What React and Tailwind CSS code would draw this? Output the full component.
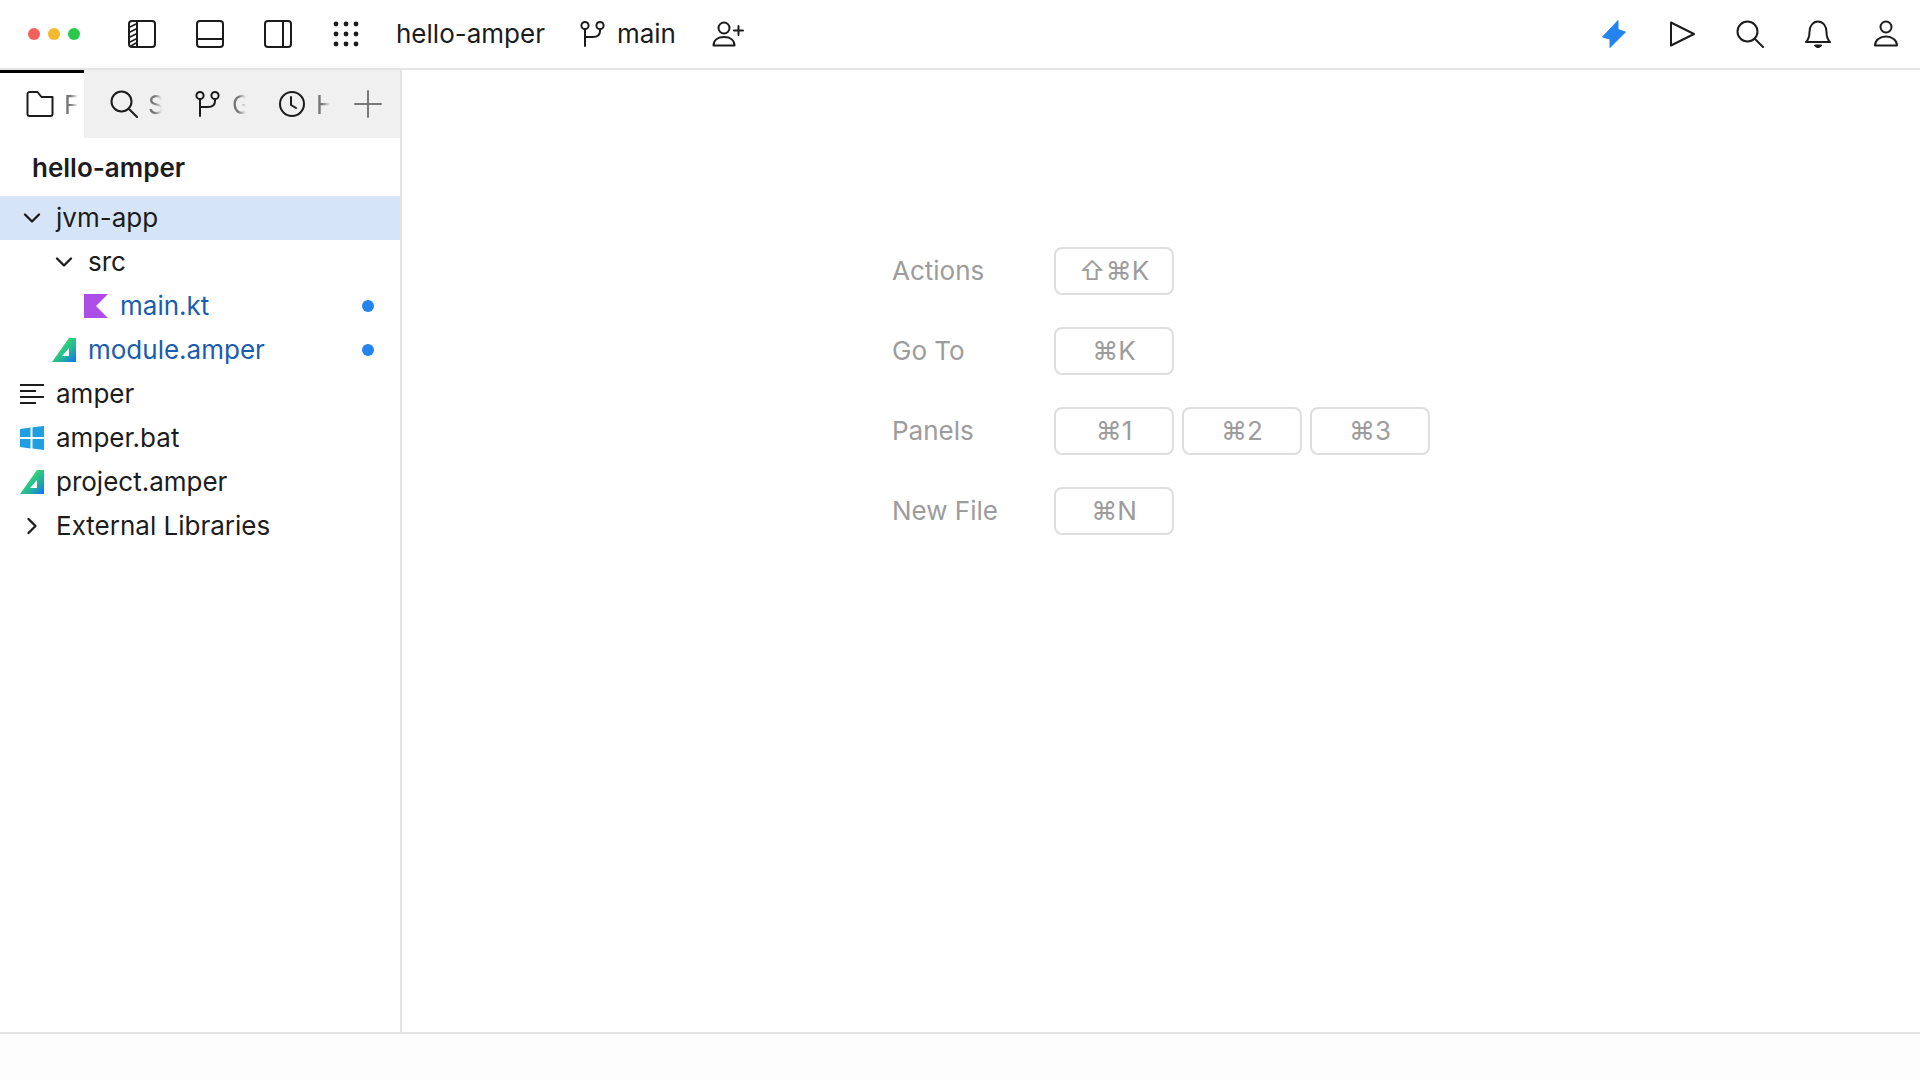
import { ChevronDown, ChevronRight } from 'lucide-react';

const ink = '#1c1c1c';

function Icon({ size = 28, stroke = ink, width = 2, children }) {
  return (
    <svg width={size} height={size} viewBox="0 0 28 28" fill="none" stroke={stroke} strokeWidth={width} strokeLinecap="round" strokeLinejoin="round" className="shrink-0">
      {children}
    </svg>
  );
}

const SidebarLeftIcon = () => (
  <Icon>
    <rect x="1" y="1" width="26" height="26" rx="3" />
    <path d="M9 1v26" />
    <path d="M2 7l6-3M2 12l6-3M2 17l6-3M2 22l6-3M3 26l5-3" strokeWidth="1.5" />
  </Icon>
);
const PanelBottomIcon = () => (
  <Icon>
    <rect x="1" y="1" width="26" height="26" rx="3" />
    <path d="M1 19h26" />
  </Icon>
);
const SidebarRightIcon = () => (
  <Icon>
    <rect x="1" y="1" width="26" height="26" rx="3" />
    <path d="M19 1v26" />
  </Icon>
);
const GridIcon = () => (
  <svg width="26" height="26" viewBox="0 0 26 26" fill={ink} className="shrink-0">
    {[3, 13, 23].map((y) => [3, 13, 23].map((x) => <circle key={`${x}-${y}`} cx={x} cy={y} r="2.4" />))}
  </svg>
);
const BranchIcon = () => (
  <Icon>
    <circle cx="6" cy="5.500" r="3.600" />
    <circle cx="21" cy="5.500" r="3.600" />
    <path d="M6 9.500V26M21 9.500v1.500c0 4-3 6-7 6H6" />
  </Icon>
);
const AddUserIcon = () => (
  <svg width="32" height="26" viewBox="0 0 32 26" fill="none" stroke={ink} strokeWidth="2" strokeLinecap="round" strokeLinejoin="round" className="shrink-0">
    <circle cx="12" cy="7" r="5.5" />
    <path d="M1.5 24.5c0-5.500 4.500-8.500 10.500-8.500s10.500 3 10.500 8.500z" />
    <path d="M26.500 5v9M22 9.500h9" />
  </svg>
);
const BoltIcon = () => (
  <svg width="26" height="30" viewBox="0 0 26 30" className="shrink-0">
    <path d="M17 1.500 L1.500 18 L9 20 L9 28.500 L24.500 13 L17 10.500 Z" fill="#2383f0" stroke="#2383f0" strokeLinejoin="round" />
  </svg>
);
const PlayIcon = () => (
  <Icon>
    <path d="M3 2.500 L26 14 L3 25.500 Z" />
  </Icon>
);
const SearchIcon = () => (
  <Icon>
    <circle cx="11.500" cy="11.500" r="10" />
    <path d="M19 19l8 8" />
  </Icon>
);
const BellIcon = () => (
  <Icon>
    <path d="M2 22c3-3 3.500-6 3.500-10C5.500 6 9 1.500 14 1.500S22.500 6 22.500 12c0 4 .5 7 3.500 10z" />
    <path d="M11 25.500h6l-3 2z" fill={ink} />
  </Icon>
);
const UserIcon = () => (
  <Icon>
    <circle cx="14" cy="7" r="5.500" />
    <path d="M3 25.500c0-5.500 5-9 11-9s11 3.500 11 9z" />
  </Icon>
);
const FolderIcon = () => (
  <Icon>
    <path d="M1.500 4a2 2 0 0 1 2-2h8l4 5h11v17a2 2 0 0 1-2 2H3.500a2 2 0 0 1-2-2z" />
  </Icon>
);
const ClockIcon = () => (
  <Icon>
    <circle cx="14" cy="14" r="12" />
    <path d="M13 7v8l5 3" />
  </Icon>
);
const PlusIcon = () => (
  <Icon stroke="#777777">
    <path d="M14 1v26M1 14h26" />
  </Icon>
);

const KotlinIcon = () => (
  <svg width="24" height="24" viewBox="0 0 24 24" className="shrink-0">
    <path d="M0 0h24L12 12l12 12H0z" fill="#ab4de6" />
  </svg>
);
const AmperIcon = ({ id }) => (
  <svg width="24" height="24" viewBox="0 0 24 24" className="shrink-0">
    <defs>
      <linearGradient id={id} x1="0" y1="0" x2="1" y2="1">
        <stop offset="0.4" stopColor="#2fd07a" />
        <stop offset="0.65" stopColor="#22b39a" />
        <stop offset="0.95" stopColor="#1478f0" />
      </linearGradient>
    </defs>
    <path fillRule="evenodd" d="M17 0h7v24H0zM17 10l-7 8h7z" fill={`url(#${id})`} />
  </svg>
);
const WindowsIcon = () => (
  <svg width="24" height="24" viewBox="0 0 24 24" fill="#1f9fe2" className="shrink-0">
    <path d="M0 3l10.500-1.500V11H0zM12.500 1.200L24 0v11H12.500zM0 13h10.500v9.500L0 21zM12.500 13H24v11l-11.500-1.500z" />
  </svg>
);
const ScriptIcon = () => (
  <svg width="24" height="24" viewBox="0 0 24 24" fill="#1c1c1c" className="shrink-0">
    <rect x="0" y="2" width="24" height="2" />
    <rect x="0" y="8" width="16" height="2" />
    <rect x="0" y="14" width="24" height="2" />
    <rect x="0" y="20" width="16" height="2" />
  </svg>
);

function Cell({ children }) {
  return <div className="w-[68px] h-[68px] flex items-center justify-center">{children}</div>;
}

function Tab({ icon, label, active }) {
  return (
    <div className={`w-[84px] h-full flex items-center gap-[10px] pl-[26px] pr-[6px] overflow-hidden ${active ? 'bg-white border-t-[3px] border-black pb-[3px]' : ''}`}>
      {icon}
      <span className="text-[26px] text-[#777777] overflow-hidden whitespace-nowrap [mask-image:linear-gradient(to_right,black_45%,transparent)]">
        {label}
      </span>
    </div>
  );
}

function Row({ indent, icon, label, gap = 'gap-3', selected, modified }) {
  return (
    <div className={`h-[44px] flex items-center ${selected ? 'bg-[#d6e4f7]' : ''}`}>
      <div className={`flex items-center ${gap} ${indent}`}>
        {icon}
        <span className={`text-[26px] leading-none whitespace-nowrap ${modified ? 'text-[#1a5cb0]' : 'text-[#1c1c1c]'}`}>{label}</span>
      </div>
      {modified && <span className="ml-auto mr-[26px] w-3 h-3 rounded-full bg-[#2383f0]" />}
    </div>
  );
}

function Key({ children }) {
  return (
    <div className="w-[120px] h-[48px] pb-[2px] rounded-[8px] border-2 border-[#dedede] flex items-center justify-center text-[26px] text-[#9c9c9c]">
      {children}
    </div>
  );
}

function Shortcut({ label, keys }) {
  return (
    <div className="flex items-center h-[48px]">
      <span className="w-[162px] pb-[2px] text-[26px] text-[#9c9c9c]">{label}</span>
      <div className="flex gap-[8px]">
        {keys.map((k) => <Key key={k}>{k}</Key>)}
      </div>
    </div>
  );
}

export default function App() {
  return (
    <div className="w-[1920px] h-screen flex flex-col bg-white overflow-hidden font-['Inter','DejaVu_Sans',sans-serif] text-[#1c1c1c]">
      {/* top bar */}
      <header className="h-[70px] shrink-0 flex items-center border-b-2 border-[#e4e4e4]">
        <div className="flex items-center gap-2 pl-[28px] w-[108px]">
          <span className="w-3 h-3 rounded-full bg-[#f4605a]" />
          <span className="w-3 h-3 rounded-full bg-[#f6b82f]" />
          <span className="w-3 h-3 rounded-full bg-[#2cc84a]" />
        </div>
        <Cell><SidebarLeftIcon /></Cell>
        <Cell><PanelBottomIcon /></Cell>
        <Cell><SidebarRightIcon /></Cell>
        <Cell><GridIcon /></Cell>
        <span className="ml-4 pb-[2px] text-[26px]">hello-amper</span>
        <div className="ml-[34px] flex items-center gap-[10px]">
          <BranchIcon />
          <span className="pb-[2px] text-[26px]">main</span>
        </div>
        <div className="ml-9"><AddUserIcon /></div>
        <div className="ml-auto flex">
          <Cell><BoltIcon /></Cell>
          <Cell><PlayIcon /></Cell>
          <Cell><SearchIcon /></Cell>
          <Cell><BellIcon /></Cell>
          <Cell><UserIcon /></Cell>
        </div>
      </header>

      <div className="flex-1 flex min-h-0">
        {/* sidebar */}
        <aside className="w-[402px] shrink-0 border-r-2 border-[#e4e4e4]">
          <div className="h-[68px] flex bg-[#f0f0f0]">
            <Tab active icon={<FolderIcon />} label="Files" />
            <Tab icon={<SearchIcon />} label="Search" />
            <Tab icon={<BranchIcon />} label="Git" />
            <Tab icon={<ClockIcon />} label="History" />
            <div className="flex-1 flex items-center justify-center"><PlusIcon /></div>
          </div>
          <div className="h-[58px] pl-8 flex items-center text-[26px] font-semibold">hello-amper</div>
          <Row selected indent="pl-[18px]" gap="gap-[10px]" icon={<ChevronDown size={28} strokeWidth={2} color={ink} />} label="jvm-app" />
          <Row indent="pl-[50px]" gap="gap-[10px]" icon={<ChevronDown size={28} strokeWidth={2} color={ink} />} label="src" />
          <Row modified indent="pl-[84px]" icon={<KotlinIcon />} label="main.kt" />
          <Row modified indent="pl-[52px]" icon={<AmperIcon id="amper-module" />} label="module.amper" />
          <Row indent="pl-5" icon={<ScriptIcon />} label="amper" />
          <Row indent="pl-5" icon={<WindowsIcon />} label="amper.bat" />
          <Row indent="pl-5" icon={<AmperIcon id="amper-project" />} label="project.amper" />
          <Row indent="pl-[18px]" gap="gap-[10px]" icon={<ChevronRight size={28} strokeWidth={2} color={ink} />} label="External Libraries" />
        </aside>

        {/* shortcuts */}
        <main className="flex-1 pl-[490px] pt-[177px] flex flex-col gap-[32px]">
          <Shortcut label="Actions" keys={['⇧⌘K']} />
          <Shortcut label="Go To" keys={['⌘K']} />
          <Shortcut label="Panels" keys={['⌘1', '⌘2', '⌘3']} />
          <Shortcut label="New File" keys={['⌘N']} />
        </main>
      </div>

      {/* status bar */}
      <footer className="h-[48px] shrink-0 border-t-2 border-[#e4e4e4] bg-[#fdfdfd]" />
    </div>
  );
}
